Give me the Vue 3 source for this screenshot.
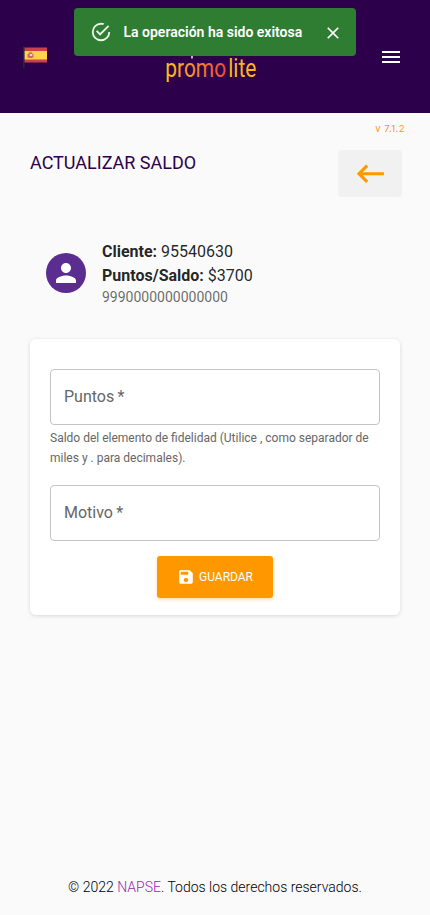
<script setup>
import { ref } from 'vue'

const cliente = '95540630'
const saldo = '$3700'
const tarjeta = '9990000000000000'
const puntos = ref('')
const motivo = ref('')
</script>

<template>
  <div class="page">
    <header class="topbar">
      <svg class="flag" width="24" height="24" viewBox="0 0 24 24">
        <rect x="1" y="2.5" width="23" height="15" fill="#c8414b" />
        <rect x="1" y="6" width="23" height="8.5" fill="#ffd34d" />
        <path d="M4 9h1v4H4zM10 9h1v4h-1z" fill="#dfa06f" />
        <rect x="5" y="8" width="5" height="5" rx="1.5" fill="#d16464" />
        <rect x="6.8" y="9" width="2.4" height="2" fill="#ead9d3" />
        <path d="M6 6.8h3v1H6z" fill="#d38b48" />
        <rect x="0" y="1.5" width="1.6" height="22" rx=".5" fill="#252a31" />
      </svg>
      <svg class="logo" width="94" height="54" viewBox="0 0 94 54" role="img">
        <defs>
          <linearGradient id="warm" gradientUnits="userSpaceOnUse" x1="1" y1="0" x2="75" y2="0">
            <stop offset="0" stop-color="#fcc419" />
            <stop offset=".55" stop-color="#f58233" />
            <stop offset="1" stop-color="#ee4a38" />
          </linearGradient>
        </defs>
        <rect x="25.3" y="20" width="1.4" height="8.5" fill="#fff" />
        <text class="word" transform="translate(-0.7 47.2) scale(0.805 1)" x="0" y="0" fill="url(#warm)">promo<tspan dx="2.6" fill="#fbb61c">lite</tspan></text>
      </svg>
      <svg class="menu" width="24" height="24" viewBox="0 0 24 24" fill="#fff">
        <path d="M3 18h18v-2H3v2zm0-5h18v-2H3v2zm0-7v2h18V6H3z" />
      </svg>
    </header>

    <div class="toast" role="alert">
      <svg class="ok" width="22" height="22" viewBox="0 0 24 24" fill="#fff">
        <path d="M20,12A8,8 0 0,1 12,20A8,8 0 0,1 4,12A8,8 0 0,1 12,4C12.76,4 13.5,4.11 14.2,4.31L15.77,2.74C14.61,2.26 13.34,2 12,2A10,10 0 0,0 2,12A10,10 0 0,0 12,22A10,10 0 0,0 22,12M7.91,10.08L6.5,11.5L11,16L21,6L19.59,4.58L11,13.17L7.91,10.08Z" />
      </svg>
      <span class="message">La operación ha sido exitosa</span>
      <svg class="close" width="20" height="20" viewBox="0 0 24 24" fill="#fff">
        <path d="M19 6.41L17.59 5 12 10.59 6.41 5 5 6.41 10.59 12 5 17.59 6.41 19 12 13.41 17.59 19 19 17.59 13.41 12z" />
      </svg>
    </div>

    <main class="content">
      <div class="version">v 7.1.2</div>
      <div class="heading">
        <h1>ACTUALIZAR SALDO</h1>
        <button class="back" type="button">
          <svg width="36" height="36" viewBox="0 0 24 24" fill="none" stroke="#ff9800" stroke-width="2.1">
            <path d="M21.3 11.8H4.8M10.1 6.4L4.7 11.8l5.4 5.4" />
          </svg>
        </button>
      </div>

      <section class="client">
        <div class="avatar">
          <svg width="30" height="30" viewBox="0 0 24 24" fill="#fff">
            <path d="M12 12c2.21 0 4-1.79 4-4s-1.79-4-4-4-4 1.79-4 4 1.79 4 4 4zm0 2c-2.67 0-8 1.34-8 4v2h16v-2c0-2.66-5.33-4-8-4z" />
          </svg>
        </div>
        <div>
          <p><b>Cliente:</b> {{ cliente }}</p>
          <p><b>Puntos/Saldo:</b> {{ saldo }}</p>
          <p class="card-number">{{ tarjeta }}</p>
        </div>
      </section>

      <form class="card" @submit.prevent>
        <input v-model="puntos" class="field" placeholder="Puntos&#8201;*" />
        <p class="help">Saldo del elemento de fidelidad (Utilice , como separador de miles y . para decimales).</p>
        <input v-model="motivo" class="field" placeholder="Motivo&#8201;*" />
        <button class="save" type="submit">
          <svg width="18" height="18" viewBox="0 0 24 24" fill="#fff">
            <path d="M17 3H5c-1.11 0-2 .9-2 2v14c0 1.1.89 2 2 2h14c1.1 0 2-.9 2-2V7l-4-4zm-5 16c-1.66 0-3-1.34-3-3s1.34-3 3-3 3 1.34 3 3-1.34 3-3 3zm3-10H5V5h10v4z" />
          </svg>
          <span>GUARDAR</span>
        </button>
      </form>
    </main>

    <footer class="footer">© 2022 <a>NAPSE</a>. Todos los derechos reservados.</footer>
  </div>
</template>

<style>
body {
  background: #fafafa;
}
</style>

<style scoped>
.page {
  position: relative;
  display: flex;
  flex-direction: column;
  box-sizing: border-box;
  height: 915px;
  font-family: Roboto, "Liberation Sans", sans-serif;
  color: rgba(0, 0, 0, 0.87);
  background: #fafafa;
}
.topbar {
  display: flex;
  align-items: center;
  justify-content: space-between;
  box-sizing: border-box;
  height: 113px;
  padding: 0 27px 0 23px;
  background: #2d004b;
}
.logo {
  overflow: visible;
}
.word {
  font: 400 26px Roboto, sans-serif;
}
.toast {
  position: absolute;
  top: 8px;
  left: 74px;
  display: flex;
  align-items: center;
  box-sizing: border-box;
  width: 282px;
  height: 48px;
  padding: 0 13px 0 16px;
  border-radius: 4px;
  background: #2e7d32;
  color: #fff;
}
.ok {
  opacity: 0.9;
}
.message {
  flex: 1;
  margin-left: 11.5px;
  font-size: 14px;
  font-weight: 600;
}
.close {
  margin-top: 2px;
}
.content {
  flex: 1;
  padding: 0 30px;
}
.version {
  margin: 9px -5px 0 0;
  font: 9.5px/14px Inter, sans-serif;
  letter-spacing: 0.45px;
  text-align: right;
  color: #ff9233;
}
.heading {
  display: flex;
  justify-content: space-between;
  margin: 14px -2px 0 0;
}
h1 {
  margin: 0;
  font-size: 18px;
  font-weight: 400;
  line-height: 26px;
  color: #2d004b;
}
.back {
  display: flex;
  align-items: center;
  justify-content: center;
  width: 64px;
  height: 47px;
  padding: 0;
  border: 0;
  border-radius: 4px;
  background: #f1f1f1;
}
.client {
  display: flex;
  align-items: center;
  gap: 16px;
  margin: 43px 16px 0;
}
.avatar {
  display: flex;
  align-items: center;
  justify-content: center;
  width: 40px;
  height: 40px;
  margin-bottom: 2px;
  border-radius: 50%;
  background: #5c2d91;
}
p {
  margin: 0;
  font-size: 16px;
  line-height: 24px;
}
.client .card-number {
  margin-bottom: 2px;
  font-size: 14px;
  line-height: 18px;
  color: rgba(0, 0, 0, 0.6);
}
.card {
  display: flex;
  flex-direction: column;
  box-sizing: border-box;
  height: 276px;
  margin-top: 31px;
  padding: 30px 20px 17px;
  border-radius: 6px;
  background: #fff;
  box-shadow: 0 1px 4px rgba(0, 0, 0, 0.14);
}
.field {
  flex: none;
  box-sizing: border-box;
  width: 100%;
  height: 56px;
  padding: 0 13px 2px;
  border: 1px solid #c4c4c4;
  border-radius: 4px;
  background: #fff;
  font: 16px Roboto, sans-serif;
}
.field::placeholder {
  color: #666;
  opacity: 1;
}
.help {
  margin: 3px 0 17px;
  font-size: 12px;
  line-height: 20px;
  color: #666;
}
.save {
  display: flex;
  align-items: center;
  justify-content: center;
  align-self: center;
  gap: 4px;
  flex: none;
  width: 116px;
  height: 42px;
  margin-top: 15px;
  padding: 0;
  border: 0;
  border-radius: 3px;
  background: #ff9800;
  box-shadow: 0 2px 3px rgba(255, 152, 0, 0.2), 0 1px 4px rgba(255, 152, 0, 0.14);
  color: #fff;
  font: 400 12px Roboto, sans-serif;
}
.footer {
  height: 38px;
  font-size: 14px;
  font-weight: 300;
  line-height: 21px;
  text-align: center;
  color: #000;
}
.footer a {
  color: #9c27b0;
}
</style>
